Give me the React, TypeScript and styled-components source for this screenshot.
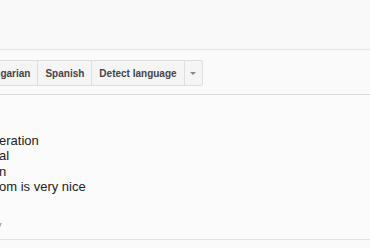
import React from 'react';
import styled, { createGlobalStyle } from 'styled-components';

const GlobalStyle = createGlobalStyle`
   html, body {
      margin: 0;
      padding: 0;
      background: #fafafa;
      overflow: hidden;
   }
   body {
      font-family: 'Liberation Sans', Arial, sans-serif;
   }
`;

const languages = ['Hungarian', 'Spanish', 'Detect language'];
const lines = ['eration', 'al', 'n', 'om is very nice'];

const App = (): JSX.Element => (
   <Page>
      <GlobalStyle />
      <TopBand />
      <Toolbar>
         <ButtonGroup>
            {languages.map(lang => (
               <LangButton key={lang}>{lang}</LangButton>
            ))}
            <ArrowButton>
               <Caret />
            </ArrowButton>
         </ButtonGroup>
      </Toolbar>
      <Content>
         <Lines>
            {lines.map((l, i) => (
               <Line key={i}>{l}</Line>
            ))}
         </Lines>
         <Hint>y</Hint>
      </Content>
      <Footer />
   </Page>
);

export default App;

const Page = styled.div`
   width: 370px;
   height: 248px;
   overflow: hidden;
   background: #fafafa;
`;

const TopBand = styled.div`
   height: 49px;
   background: #f9f9f9;
   border-bottom: 1px solid #e4e4e4;
`;

const Toolbar = styled.div`
   height: 44px;
   display: flex;
   align-items: center;
   background: #fafafa;
   border-bottom: 1px solid #d9d9d9;
   box-shadow: 0 1px 0 #ececec;
`;

const ButtonGroup = styled.div`
   display: flex;
   height: 24px;
   margin-left: -27px;
   margin-top: 2px;
   border: 1px solid #dedede;
   border-radius: 2px;
   background: #f5f5f5;
`;

const LangButton = styled.div`
   display: flex;
   align-items: center;
   padding: 0 7px;
   font-size: 10px;
   font-weight: bold;
   color: #444;
   border-right: 1px solid #dedede;
`;

const ArrowButton = styled.div`
   width: 17px;
   display: flex;
   align-items: center;
   justify-content: center;
`;

const Caret = styled.span`
   width: 0;
   height: 0;
   border-left: 3px solid transparent;
   border-right: 3px solid transparent;
   border-top: 3px solid #888;
   margin-top: 1px;
`;

const Content = styled.div`
   height: 145px;
   padding-top: 38px;
   box-sizing: border-box;
   background: #fbfbfb;
   border-bottom: 1px solid #e3e3e3;
`;

const Lines = styled.div`
   font-size: 13px;
   line-height: 15.33px;
   color: #222;
`;

const Line = styled.div`
   white-space: nowrap;
   margin-left: -1px;
`;

const Hint = styled.div`
   margin-top: 25px;
   margin-left: -4px;
   font-size: 11px;
   line-height: 12px;
   color: #888;
`;

const Footer = styled.div`
   height: 7px;
   background: #fafafa;
`;
